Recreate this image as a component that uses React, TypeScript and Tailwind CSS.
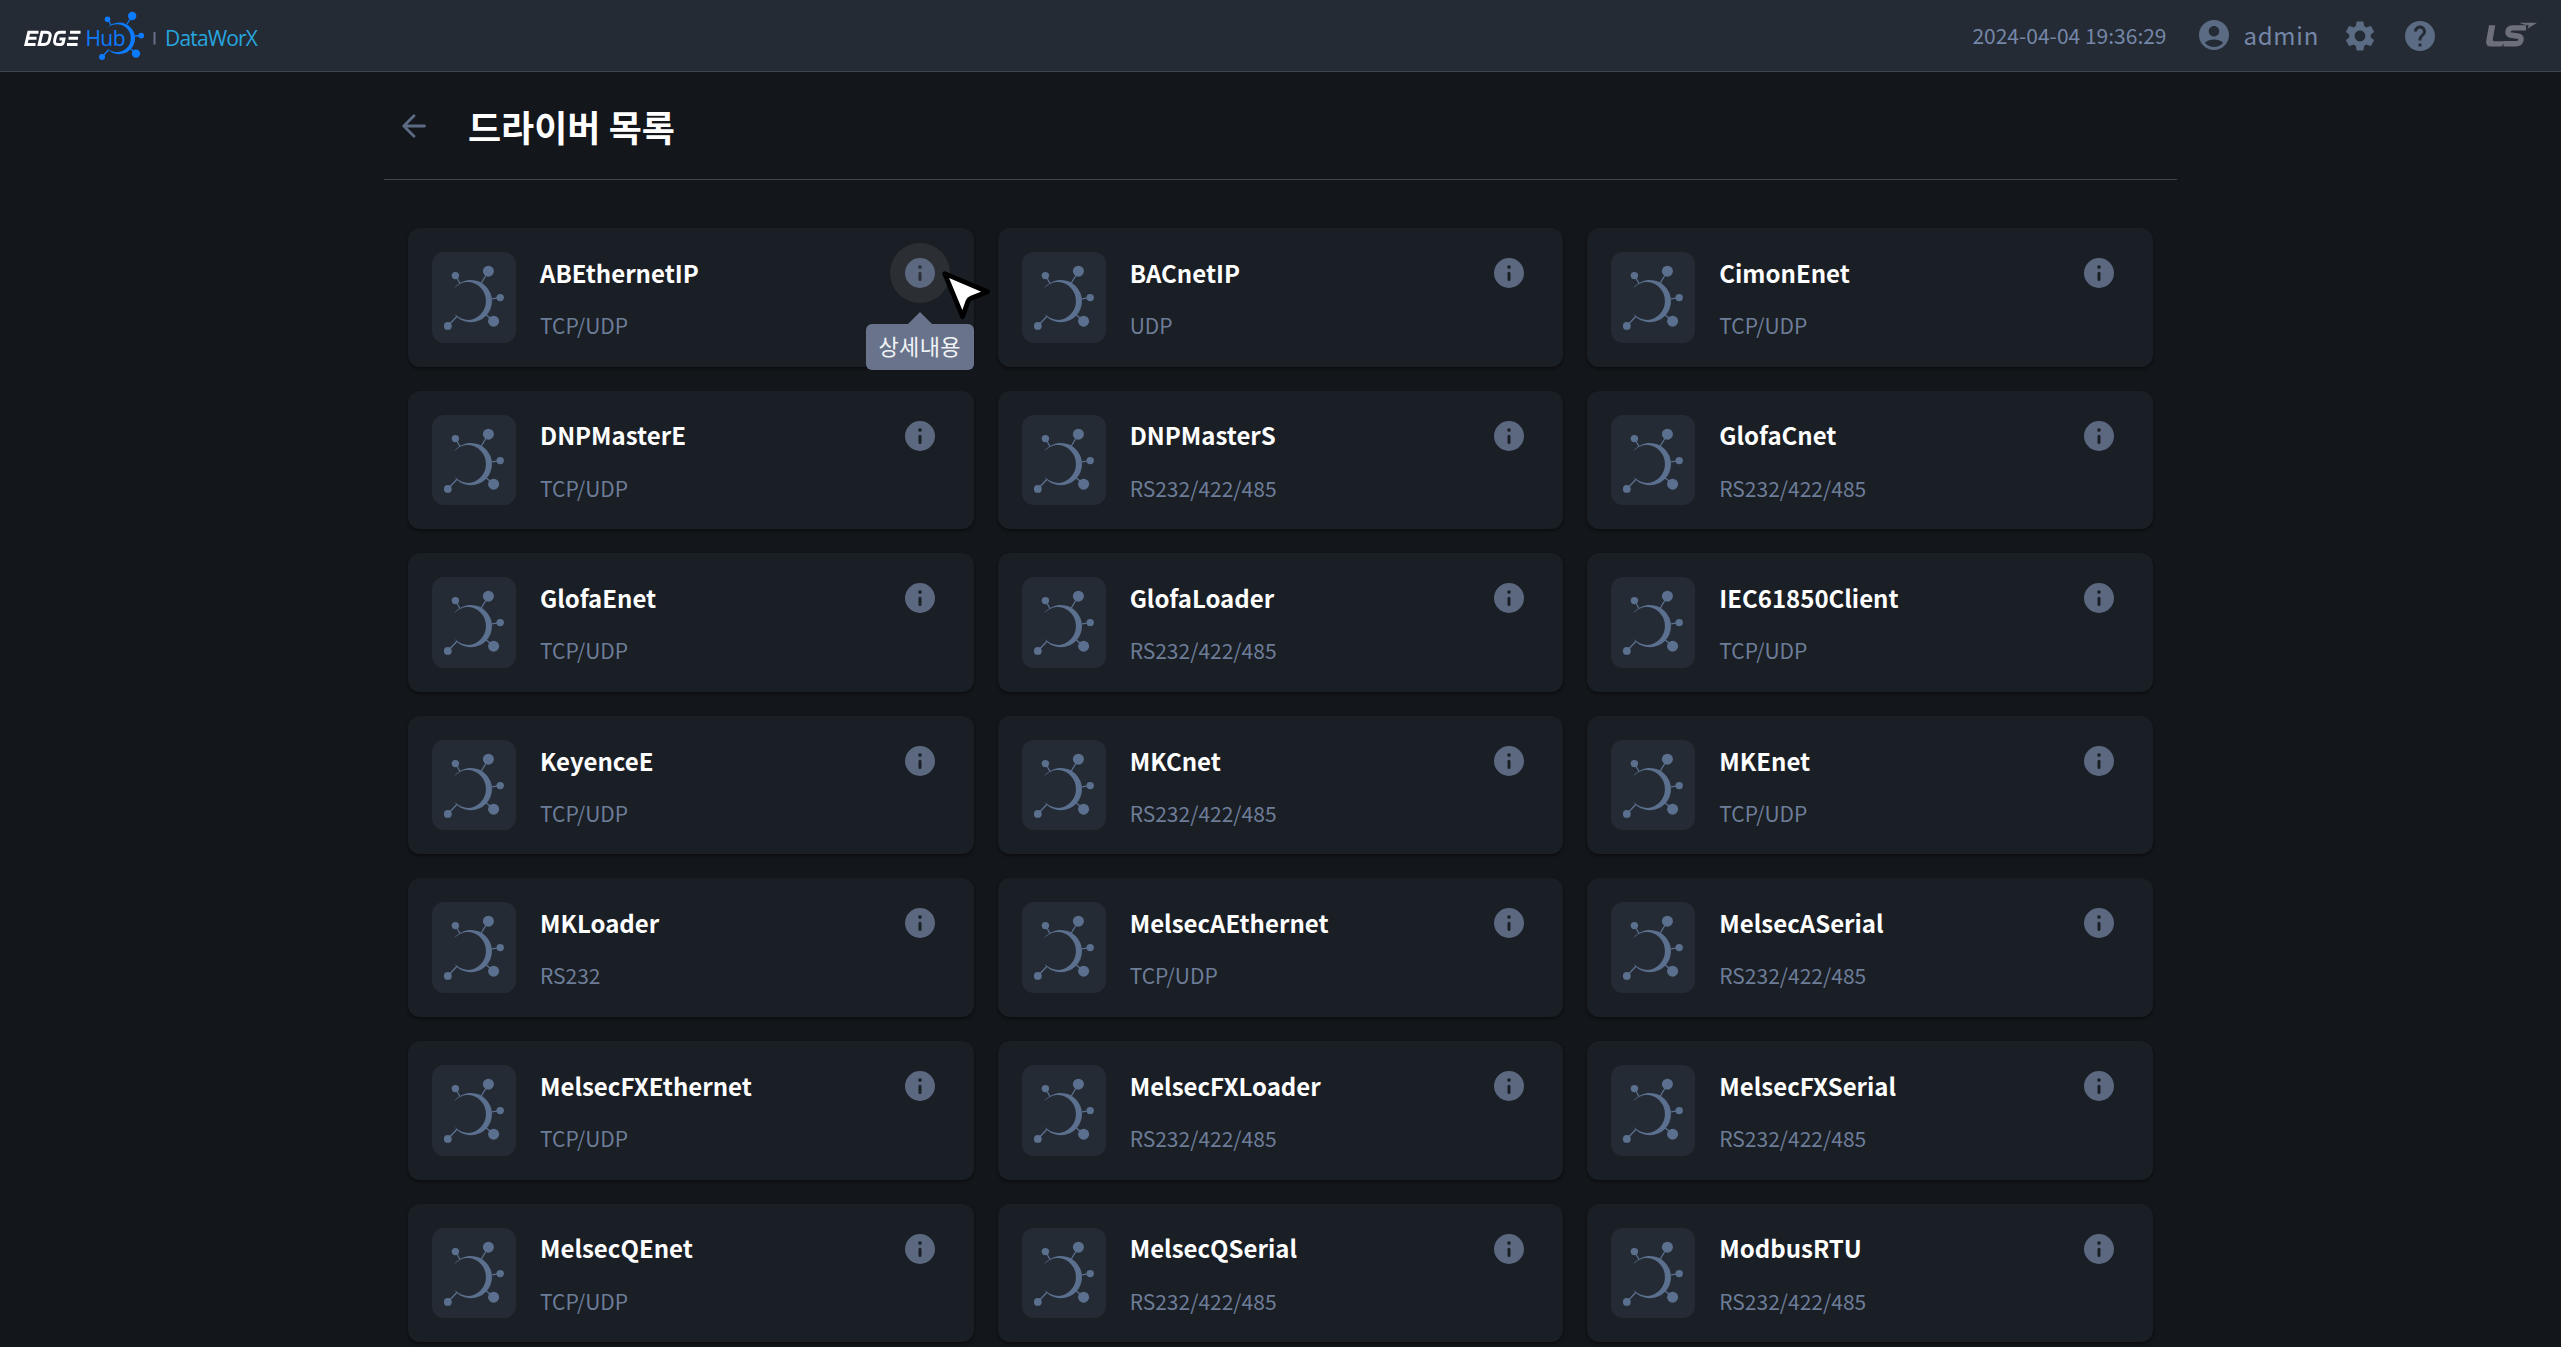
import React from "react";

const FONT = "font-['Noto_Sans_CJK_KR','Noto_Sans',sans-serif]";

const drivers: [string, string][] = [
  ["ABEthernetIP", "TCP/UDP"],
  ["BACnetIP", "UDP"],
  ["CimonEnet", "TCP/UDP"],
  ["DNPMasterE", "TCP/UDP"],
  ["DNPMasterS", "RS232/422/485"],
  ["GlofaCnet", "RS232/422/485"],
  ["GlofaEnet", "TCP/UDP"],
  ["GlofaLoader", "RS232/422/485"],
  ["IEC61850Client", "TCP/UDP"],
  ["KeyenceE", "TCP/UDP"],
  ["MKCnet", "RS232/422/485"],
  ["MKEnet", "TCP/UDP"],
  ["MKLoader", "RS232"],
  ["MelsecAEthernet", "TCP/UDP"],
  ["MelsecASerial", "RS232/422/485"],
  ["MelsecFXEthernet", "TCP/UDP"],
  ["MelsecFXLoader", "RS232/422/485"],
  ["MelsecFXSerial", "RS232/422/485"],
  ["MelsecQEnet", "TCP/UDP"],
  ["MelsecQSerial", "RS232/422/485"],
  ["ModbusRTU", "RS232/422/485"],
];

function HubMark() {
  return (
    <svg viewBox="0 0 84 91" className="h-[91px] w-[84px]" fill="#5b708e">
      <path d="M22 36 C27 30.500 33 28 39 28 A21 21.100 0 0 1 39 70.200 C31.500 70.200 26 67 22.300 61.800 C27 66 32 68 36.500 68 A18.800 19.100 0 0 0 36.500 29.900 C31 29.900 27 31.800 22 36Z" />
      <path
        stroke="#5b708e"
        strokeWidth="1.300"
        d="M23.500 23.500 28 31.500M56.500 19 49 31.500M68 45.700 60 46.900M61.500 69 54 62.800M16 73.800 25 64.300"
      />
      <circle cx="23.400" cy="23.600" r="3.700" />
      <circle cx="56.400" cy="19.200" r="5.500" />
      <circle cx="68.200" cy="45.600" r="3.700" />
      <circle cx="61.600" cy="69.200" r="5.500" />
      <circle cx="15.800" cy="73.900" r="3.900" />
    </svg>
  );
}

function InfoIcon() {
  return (
    <svg viewBox="0 0 30 30" className="size-[30px]">
      <path
        fill="#5b6880"
        fillRule="evenodd"
        d="M15 0a15 15 0 1 0 0 30a15 15 0 0 0 0-30zM15 7.300a1.800 1.800 0 1 1 0 3.600a1.800 1.800 0 0 1 0-3.600zM15 13.700a1.500 1.500 0 0 1 1.500 1.500v6.200a1.500 1.500 0 0 1-3 0v-6.200a1.500 1.500 0 0 1 1.500-1.500z"
      />
    </svg>
  );
}

function Tooltip() {
  return (
    <div className="absolute top-[81px] left-1/2 flex h-[46px] w-[108px] -translate-x-1/2 items-center justify-center rounded-[6px] bg-[#69748c] text-[22px] tracking-[0.3px] text-[#f1f3f6]">
      <svg viewBox="0 0 24 12" className="absolute -top-3 left-[42px] h-3 w-6" fill="#69748c">
        <path d="M0 12 12 0 24 12z" />
      </svg>
      <span className="mb-[4px] leading-none whitespace-nowrap">상세내용</span>
    </div>
  );
}

function Cursor() {
  return (
    <svg viewBox="0 0 52 52" className="absolute top-[27px] left-[51px] h-[52px] w-[52px]">
      <path
        d="M3.700 3.600 46.500 21.700 30 28.200Q27.800 29 27 31.200L21.500 46.700z"
        fill="#fff"
        stroke="#000"
        strokeWidth="4.800"
        strokeLinejoin="round"
      />
    </svg>
  );
}

function Card({ name, protocol, active }: { name: string; protocol: string; active: boolean }) {
  return (
    <div className="flex h-[138.6px] rounded-[12px] bg-[#1a1e25] p-6 shadow-[0_2px_3px_rgba(0,0,0,0.4)]">
      <div className="h-[90.6px] w-[84px] shrink-0 overflow-hidden rounded-[12px] bg-[#252b34]">
        <HubMark />
      </div>
      <div className="ml-6 flex flex-1 flex-col">
        <div className="mt-[2.8px] text-[24px] leading-[36px] font-bold text-white">{name}</div>
        <div className="mt-[18.2px] text-[21px] leading-[32px] text-[#6d7d98]">{protocol}</div>
      </div>
      <div
        className={
          active
            ? "relative z-10 -mt-[9px] flex size-[60px] items-center justify-center rounded-full bg-[#2b2f33]"
            : "-mt-[9px] flex size-[60px] items-center justify-center rounded-full"
        }
      >
        <InfoIcon />
        {active && <Tooltip />}
        {active && <Cursor />}
      </div>
    </div>
  );
}

function HeaderLogo() {
  return (
    <svg viewBox="0 0 270 71" className="h-[71px] w-[270px]">
      <g fill="none" stroke="#fff" strokeWidth="3">
        <path d="M38.500 32.300H28.800L25.900 44.400H35.500M27.500 38.300H36.500" />
        <path d="M42 32.300H46.500Q51 32.300 50 37L49.300 40Q48.300 44.400 44 44.400H39.200Z" />
        <path d="M65.800 32.300H60.500Q56.500 32.300 55.500 36.500L54.700 40Q53.700 44.400 57.800 44.400H60.800Q62.800 44.400 63.300 42.200L64 39H59.500" />
        <path d="M70 32.300H80.500M68.500 38.300H78M67 44.400H77.500" />
      </g>
      <text x="85.500" y="45.500" fontFamily="Open Sans, sans-serif" fontSize="21" fill="#0d7bff" textLength="40">Hub</text>
      <path
        fill="#0d7bff"
        d="M106.500 28.500C110 24.500 114 22.500 119 22.500A16 15.800 0 0 1 119 54.200C114 54.200 110 52 107 48.500C110.500 51 114 52.200 117 52.200A13.800 14 0 0 0 117 24.200C113 24.200 110 25.500 106.500 28.500Z"
      />
      <path stroke="#0d7bff" strokeWidth="1.300" d="M107.500 19 111 25M132 16 127 24M141 35.500 135 36M136 53.500 131 49M102 57 108.500 50" />
      <g fill="#0d7bff">
        <circle cx="107.500" cy="19.200" r="2.800" />
        <circle cx="132.200" cy="16" r="4.200" />
        <circle cx="141.200" cy="35.600" r="2.900" />
        <circle cx="136" cy="53.600" r="4.200" />
        <circle cx="102" cy="57" r="3" />
      </g>
      <path stroke="#66708a" strokeWidth="2" d="M154.500 32V44.500" />
      <text x="165" y="45.500" fontFamily="Open Sans, sans-serif" fontSize="21" fill="#27a5df" textLength="93">DataWorX</text>
    </svg>
  );
}

function Header() {
  return (
    <header className="flex h-[72px] items-center border-b border-[#3d4450] bg-[#252b34] text-[#7587a8]">
      <HeaderLogo />
      <div className="flex-1" />
      <div className="mb-[2px] text-[21px] leading-8">2024-04-04 19:36:29</div>
      <svg viewBox="2 2 20 20" className="mb-[1px] ml-[32px] size-[30px]" fill="#5b6b84">
        <path d="M12 2C6.480 2 2 6.480 2 12s4.480 10 10 10 10-4.480 10-10S17.520 2 12 2zm0 4c1.930 0 3.500 1.570 3.500 3.500S13.930 13 12 13s-3.500-1.570-3.500-3.500S10.070 6 12 6zm0 14c-2.030 0-4.430-.820-6.140-2.880C7.550 15.800 9.680 15 12 15s4.450.800 6.140 2.120C16.430 19.180 14.030 20 12 20z" />
      </svg>
      <div className="mb-[2px] ml-[15px] text-[24px] leading-8 tracking-[0.72px]">admin</div>
      <svg viewBox="2 2 20 20" className="mt-[1px] ml-[26px] size-[30px]" fill="#5b6b84">
        <path d="M19.140 12.940c.040-.300.060-.610.060-.940 0-.320-.020-.640-.070-.940l2.030-1.580c.180-.140.230-.410.120-.610l-1.920-3.320c-.120-.220-.370-.290-.590-.220l-2.390.960c-.500-.380-1.030-.700-1.620-.940l-.360-2.540c-.040-.240-.240-.410-.480-.410h-3.840c-.240 0-.430.170-.470.410l-.360 2.540c-.590.240-1.130.570-1.620.940l-2.390-.960c-.220-.080-.470 0-.590.220L2.740 8.870c-.120.210-.080.470.120.610l2.030 1.580c-.050.300-.090.630-.090.940s.020.640.070.940l-2.030 1.580c-.180.140-.230.410-.120.610l1.920 3.320c.120.220.370.290.590.220l2.390-.960c.500.380 1.030.700 1.620.940l.360 2.540c.050.240.240.410.480.410h3.840c.240 0 .440-.170.470-.410l.360-2.540c.590-.240 1.130-.560 1.620-.940l2.390.960c.220.080.470 0 .590-.220l1.920-3.320c.120-.220.070-.470-.120-.610l-2.010-1.580zM12 15.600c-1.980 0-3.600-1.620-3.600-3.600s1.620-3.600 3.600-3.600 3.600 1.620 3.600 3.600-1.620 3.600-3.600 3.600z" />
      </svg>
      <svg viewBox="2 2 20 20" className="mt-[1px] ml-[30px] size-[30px]" fill="#5b6b84">
        <path d="M12 2C6.480 2 2 6.480 2 12s4.480 10 10 10 10-4.480 10-10S17.520 2 12 2zm1 17h-2v-2h2v2zm2.070-7.750l-.900.920C13.450 12.900 13 13.500 13 15h-2v-.500c0-1.100.450-2.100 1.170-2.830l1.240-1.260c.370-.360.590-.860.590-1.410 0-1.100-.900-2-2-2s-2 .900-2 2H8c0-2.210 1.790-4 4-4s4 1.790 4 4c0 .880-.360 1.680-.930 2.250z" />
      </svg>
      <svg viewBox="0 0 52 30" className="mr-[24px] ml-[50px] h-[30px] w-[52px]" fill="#6d7079">
        <path d="M4 4.200H10.300L7.800 18Q7.400 20.300 9.500 20.300H20.500L16.500 25.500H6Q.400 25.500 1.200 20Z" />
        <path fill="none" stroke="#6d7079" strokeWidth="5.400" d="M41 6.900H28.500Q23.500 6.900 23 10.500Q22.500 13.700 26.500 14.200L32.500 15Q36.800 15.700 36 19Q35.200 22.800 31 22.800H18.500" />
        <path d="M34 1.700H52L42.500 7.700L43.800 4.300Q39 3.800 34 1.700Z" />
      </svg>
    </header>
  );
}

export default function App() {
  return (
    <div className={`h-[1347px] overflow-hidden bg-[#13161a] ${FONT}`}>
      <Header />
      <main className="ml-[384px] w-[1793px]">
        <div className="flex h-[108px] items-center border-b border-[#3e4450]">
          <svg viewBox="0 0 24 24" className="ml-[18px] size-[24px]" fill="none" stroke="#5b6b84" strokeWidth="2.800" strokeLinecap="round" strokeLinejoin="round">
            <path d="M22.500 12H2M12 1.800 1.800 12 12 22.200" />
          </svg>
          <h1 className="ml-[42px] text-[36px] leading-[52px] font-bold text-white">드라이버 목록</h1>
        </div>
        <div className="mx-6 mt-[48px] grid grid-cols-3 gap-6">
          {drivers.map(([name, protocol], i) => (
            <Card key={name} name={name} protocol={protocol} active={i === 0} />
          ))}
        </div>
      </main>
    </div>
  );
}
